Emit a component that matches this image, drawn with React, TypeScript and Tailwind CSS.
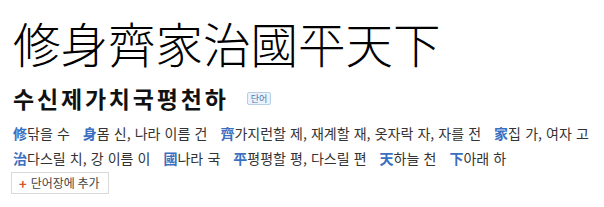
import React from "react";

const rows = [
  [
    { han: "修", mean: "닦을 수" },
    { han: "身", mean: "몸 신, 나라 이름 건" },
    { han: "齊", mean: "가지런할 제, 재계할 재, 옷자락 자, 자를 전" },
    { han: "家", mean: "집 가, 여자 고" },
  ],
  [
    { han: "治", mean: "다스릴 치, 강 이름 이" },
    { han: "國", mean: "나라 국" },
    { han: "平", mean: "평평할 평, 다스릴 편" },
    { han: "天", mean: "하늘 천" },
    { han: "下", mean: "아래 하" },
  ],
];

const kr = { fontFamily: '"Noto Sans CJK KR", "Liberation Sans", sans-serif' };

const App = () => {
  return (
    <div className="w-[604px] h-[207px] bg-white px-[13px] pt-[16px]" style={kr}>
      <h1 className="text-[47.5px] leading-[54px] font-light text-black whitespace-nowrap">
        修身齊家治國平天下
      </h1>
      <div className="flex items-center mt-[15px] h-[26px]">
        <span className="text-[23px] font-bold text-[#111] leading-none tracking-[2.8px]">수신제가치국평천하</span>
        <span className="ml-[18px] px-[3px] h-[13px] flex items-center text-[9px] leading-none text-[#4d77b3] bg-[#eaf2fb] border border-[#b9cfe8] rounded-[2px]">
          단어
        </span>
      </div>
      <div className="mt-[10px] text-[14px] leading-[25px] text-[#333] [word-spacing:1px]">
        {rows.map((row, i) => (
          <div key={i} className="flex whitespace-nowrap gap-[13px]">
            {row.map((e) => (
              <span key={e.han}>
                <span className="text-[#3b6fc1] font-bold">{e.han}</span>
                {e.mean}
              </span>
            ))}
          </div>
        ))}
      </div>
      <div className="mt-[1px]">
        <button className="h-[22px] pl-[7px] pr-[8px] -ml-[2px] flex items-center gap-[4px] border border-[#d9d9d9] bg-white text-[12px] text-[#444] leading-none">
          <span className="text-[#d2542c] font-bold text-[13px]">+</span>
          단어장에 추가
        </button>
      </div>
    </div>
  );
};

export default App;
